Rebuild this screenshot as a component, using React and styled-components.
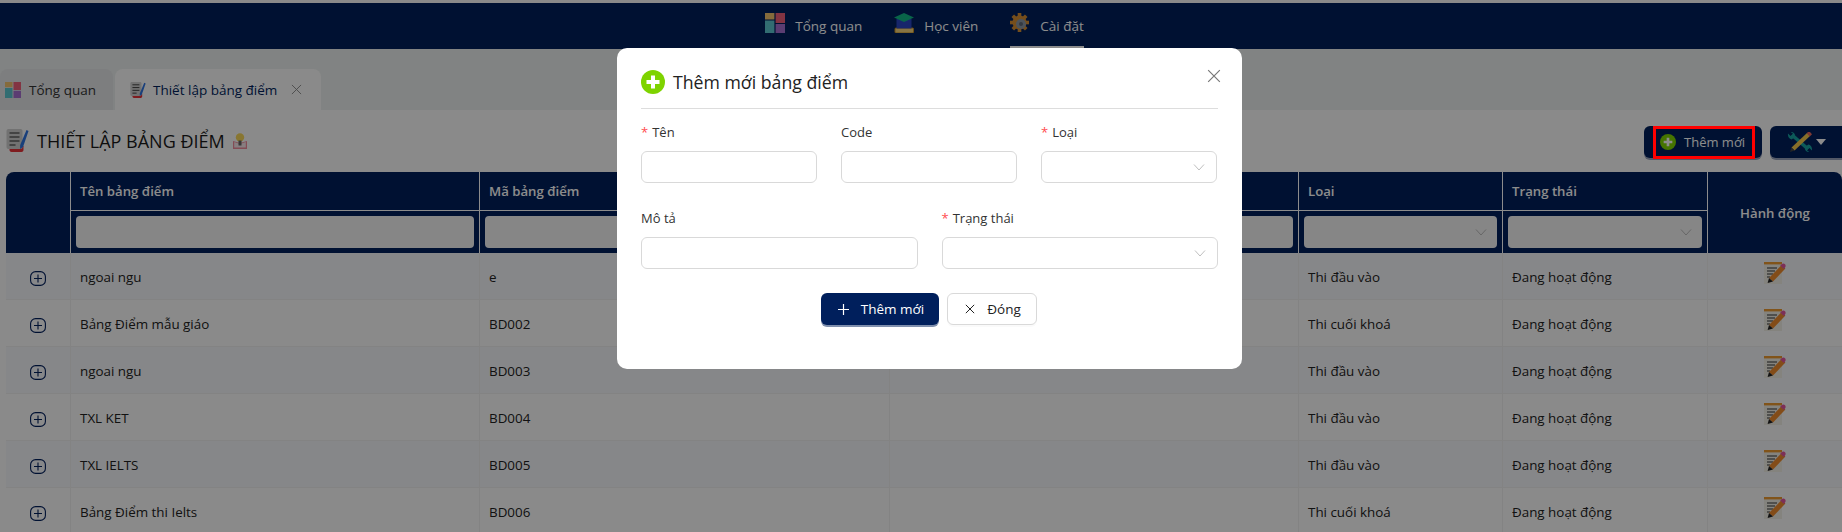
import React from "react";
import styled, { createGlobalStyle } from "styled-components";

const FONT = `"Open Sans", "Noto Sans", "Liberation Sans", sans-serif`;
const NAVY = "#001f5c";

const Global = createGlobalStyle`
  html, body { margin: 0; padding: 0; background: #fff; }
  body { font-family: ${FONT}; font-size: 13px; color: #222; }
  * { box-sizing: border-box; }
`;

const Page = styled.div`
  position: relative;
  width: 1842px;
  height: 532px;
  overflow: hidden;
  padding-top: 3px;
  background: #fcfcfc;
`;
const TopNav = styled.nav`
  height: 46px;
  background: ${NAVY};
  display: flex;
  justify-content: center;
  padding-left: 7px;
  gap: 32px;
`;
const NavItem = styled.div`
  height: 46px;
  display: flex;
  align-items: center;
  gap: 10px;
  padding-bottom: 3px;
  color: #fff;
  font-size: 13.5px;
  border-bottom: 3px solid ${(p) => (p.$active ? "#fff" : "transparent")};
`;
const NavLabel = styled.span`
  padding-top: 6px;
`;
const TabBar = styled.div`
  height: 61px;
  background: #ebefee;
  padding-top: 20px;
  display: flex;
  gap: 2px;
`;
const Tab = styled.div`
  height: 41px;
  display: flex;
  align-items: center;
  gap: ${(p) => (p.$active ? 7 : 8)}px;
  border-radius: 8px 8px 0 0;
  font-size: 13.5px;
  padding: ${(p) => (p.$active ? "0 19px 0 15px" : "0 17px 0 5px")};
  background: ${(p) => (p.$active ? "#fcfcfc" : "#e3e5e8")};
  color: ${(p) => (p.$active ? NAVY : "#333")};
`;
const CloseMark = styled.span`
  display: inline-flex;
  margin-left: 7px;
  color: #888;
`;
const Toolbar = styled.div`
  height: 62px;
  display: flex;
  justify-content: space-between;
  padding: 16px 0 0 6px;
`;
const PageTitle = styled.h1`
  margin: 3px 0 0;
  height: 23px;
  display: flex;
  align-items: center;
  gap: 8px;
  font-size: 18px;
  font-weight: 500;
  color: #1a1a1a;
`;
const Actions = styled.div`
  display: flex;
  gap: 8px;
`;
const DarkButton = styled.div`
  height: 32px;
  display: flex;
  align-items: center;
  border-radius: 6px;
  background: ${NAVY};
  color: #fff;
  font-size: 13px;
  box-shadow: 0 2px 0 rgba(0, 31, 92, 0.4);
`;
const AddButton = styled(DarkButton)`
  width: 118px;
  gap: 8px;
  padding-left: 16px;
`;
const ToolButton = styled(DarkButton)`
  width: 72px;
  gap: 3px;
  padding-left: 17px;
  border-radius: 6px 0 0 6px;
`;
const Caret = styled.span`
  width: 0;
  height: 0;
  border-left: 5px solid transparent;
  border-right: 5px solid transparent;
  border-top: 6px solid #fff;
`;
const TableWrap = styled.div`
  padding-left: 6px;
`;
const Table = styled.table`
  width: 1836px;
  table-layout: fixed;
  border-collapse: separate;
  border-spacing: 0;
`;
const HeadCell = styled.th`
  height: ${(p) => p.$h}px;
  padding: ${(p) => (p.$filter ? "5px" : "0 9px")};
  background: ${NAVY};
  color: #fff;
  font-size: 13.2px;
  font-weight: 600;
  text-align: ${(p) => (p.$center ? "center" : "left")};
  border-left: ${(p) => (p.$first ? "none" : "1px solid #fff")};
  border-bottom: ${(p) => (p.$line ? "1px solid #fff" : "none")};
  border-top-left-radius: ${(p) => (p.$first ? "8px" : "0")};
  border-top-right-radius: ${(p) => (p.$last ? "8px" : "0")};
`;
const FilterBox = styled.div`
  height: 32px;
  border-radius: 4px;
  background: #f5f5f5;
  display: flex;
  align-items: center;
  justify-content: flex-end;
  padding-right: 10px;
  color: #bbb;
`;
const BodyRow = styled.tr`
  background: ${(p) => (p.$odd ? "#fcfcfc" : "#f5f6f9")};
`;
const Cell = styled.td`
  height: 47px;
  padding: 1px 9px 0;
  font-size: 13.4px;
  color: #222;
  border-left: ${(p) => (p.$first ? "none" : "1px solid #eee")};
  border-bottom: 1px solid #eee;
  vertical-align: middle;
`;
const IconCell = styled(Cell)`
  padding: 0;
  text-align: center;
`;
const ExpandSlot = styled.span`
  display: inline-flex;
  padding-top: 8px;
`;
const EditSlot = styled.span`
  display: inline-flex;
  padding-bottom: 6px;
`;
const Overlay = styled.div`
  position: absolute;
  inset: 0;
  background: rgba(0, 0, 0, 0.45);
`;
const Highlight = styled.div`
  position: absolute;
  left: 1653px;
  top: 126px;
  width: 102px;
  height: 33px;
  border: 3px solid #ff0000;
`;
const Modal = styled.div`
  position: absolute;
  left: 617px;
  top: 48px;
  width: 625px;
  height: 321px;
  background: #fff;
  border-radius: 10px;
  padding: 22px 24px 0;
`;
const ModalHead = styled.div`
  height: 39px;
  display: flex;
  align-items: flex-start;
  gap: 8px;
  border-bottom: 1px solid #ddd;
`;
const ModalTitle = styled.div`
  font-size: 17.7px;
  font-weight: 500;
  color: #222;
  line-height: 25px;
`;
const ModalClose = styled.div`
  position: absolute;
  right: 21px;
  top: 21px;
  display: flex;
  color: #777;
`;
const FormRow = styled.div`
  display: grid;
  grid-template-columns: ${(p) => p.$template};
  gap: 24px;
  margin-top: ${(p) => p.$top}px;
`;
const Field = styled.div`
  display: flex;
  flex-direction: column;
`;
const Label = styled.label`
  height: 18px;
  line-height: 16px;
  margin-bottom: 9px;
  font-size: 13px;
  color: #333;
`;
const Star = styled.span`
  color: #ff4d4f;
  margin-right: 4px;
`;
const InputBox = styled.div`
  height: 32px;
  border: 1px solid #d9d9d9;
  border-radius: 6px;
  display: flex;
  align-items: center;
  justify-content: flex-end;
  padding-right: 11px;
  color: #bfbfbf;
`;
const ModalFooter = styled.div`
  display: flex;
  justify-content: center;
  gap: 8px;
  margin-top: 24px;
  padding-right: 1px;
`;
const PrimaryButton = styled.button`
  width: 118px;
  height: 32px;
  border: none;
  border-radius: 6px;
  padding: 0 0 0 2px;
  background: ${NAVY};
  color: #fff;
  font: 500 13.5px ${FONT};
  display: flex;
  align-items: center;
  justify-content: center;
  gap: 12px;
  box-shadow: 0 2px 0 rgba(0, 31, 92, 0.5);
`;
const GhostButton = styled.button`
  width: 90px;
  height: 32px;
  border: 1px solid #d9d9d9;
  border-radius: 6px;
  padding: 0 0 0 2px;
  background: #fff;
  color: #222;
  font: 400 13.5px ${FONT};
  display: flex;
  align-items: center;
  justify-content: center;
  gap: 12px;
  box-shadow: 0 2px 0 rgba(0, 0, 0, 0.02);
`;

const Chevron = () => (
  <svg width="12" height="12" viewBox="0 0 12 12" fill="none" stroke="currentColor" strokeWidth="1">
    <path d="M1 3.5 6 9l5-5.5" />
  </svg>
);
const Cross = ({ s = 12, w = 1 }) => (
  <svg width={s} height={s} viewBox="0 0 12 12" fill="none" stroke="currentColor" strokeWidth={w}>
    <path d="M1 1l10 10M11 1 1 11" />
  </svg>
);
const Plus = () => (
  <svg width="11" height="11" viewBox="0 0 11 11" fill="none" stroke="currentColor" strokeWidth="1.2">
    <path d="M5.5 0v11M0 5.5h11" />
  </svg>
);
const TilesIcon = ({ s = 20 }) => (
  <svg width={s} height={s} viewBox="0 0 20 20">
    <rect x="0" y="0" width="9.4" height="6.5" fill="#f2c46d" />
    <rect x="0" y="7.5" width="9.4" height="12.5" fill="#5cc6d0" />
    <rect x="10.6" y="0" width="9.4" height="10" fill="#ee5f78" />
    <rect x="10.6" y="11" width="9.4" height="9" fill="#a66fd0" />
  </svg>
);
const CapIcon = () => (
  <svg width="20" height="20" viewBox="0 0 20 20">
    <rect x="1" y="15" width="18.5" height="5" rx="1" fill="#f6d47a" stroke="#c98f1f" strokeWidth="1" />
    <rect x="2.5" y="6" width="15" height="9.5" fill="#2a46c4" />
    <path d="M10 0 20 4.5 10 9 0 4.5z" fill="#12b886" />
  </svg>
);
const GearIcon = () => (
  <svg width="20" height="20" viewBox="0 0 20 20">
    <g fill="#d58f33" transform="translate(9.5 9.5)">
      {[0, 45, 90, 135, 180, 225, 270, 315].map((a) => (
        <rect key={a} x="-1.8" y="-9.5" width="3.6" height="4" transform={`rotate(${a})`} />
      ))}
      <circle r="7" />
    </g>
    <circle cx="11" cy="11" r="5" fill="#8d99a6" />
    <circle cx="11" cy="11" r="2" fill="#5d6a78" />
  </svg>
);
const NotebookIcon = ({ s = 16 }) => (
  <svg width={s} height={s} viewBox="0 0 22 23">
    <path d="M3 17h14v4c0 1-1 2-2 2H5c-1 0-2-1-2-2z" fill="#e8343a" />
    <rect x="0" y="0" width="16" height="20" rx="2" fill="#cfcfcf" />
    <path d="M3 4h10M3 8h10M3 12h10M3 16h6" stroke="#2a2a2a" strokeWidth="1.2" />
    <path d="M20 1 22 2 16.5 18l-3 2 .2-4z" fill="#2f74e0" />
  </svg>
);
const BulbBookIcon = () => (
  <svg width="14" height="16" viewBox="0 0 14 16">
    <path d="M0 8 7 10 14 8v8H0z" fill="#ee8b9b" />
    <path d="M1.2 9 7 11l5.8-2v5.5H1.2z" fill="#f6e6ea" />
    <circle cx="7" cy="4.4" r="4.2" fill="#f8d75a" />
    <rect x="5.5" y="7.5" width="3" height="5" fill="#666" />
  </svg>
);
const ToolsIcon = () => (
  <svg width="26" height="20" viewBox="0 0 26 20" fill="none">
    <path d="M5 3 21 17" stroke="#17a2a2" strokeWidth="3.6" />
    <path d="M1 1.6 3.6 4 6 1.8 3.8 0C6.4-.4 8.6 2 8 5L4.6 7.4C2 7 .6 4 1 1.6z" fill="#17a2a2" />
    <path d="M25 18.4 22.4 16 20 18.2l2.2 1.8c-2.6.4-4.8-2-4.2-5l3.4-2.4c2.6.4 4 3.4 3.6 5.8z" fill="#17a2a2" />
    <path d="M21.5 2.5 6 17" stroke="#f5c84c" strokeWidth="4.4" />
    <path d="M21.2 2.8 23.5.6" stroke="#e8675b" strokeWidth="4.4" />
    <path d="M7.6 18.6 4.4 15.4 3 20z" fill="#444" />
  </svg>
);
const EditIcon = () => (
  <svg width="22" height="22" viewBox="0 0 22 22">
    <rect x="0" y="0" width="18" height="22" fill="#f0eee6" />
    <rect x="0" y="0" width="18" height="2.4" fill="#eb9a30" />
    <path d="M3 6h10M3 9h8M3 12h6M3 15h3" stroke="#333" strokeWidth="1.2" />
    <path d="M17.6 3 21.4 6.6 9 19.4 5 16z" fill="#ef8b2c" />
    <path d="M17.4 2.6c1-1.2 2.6-1.4 3.6-.4s.8 2.6-.2 3.6l-1 1.2-3.6-3.4z" fill="#e2569e" />
    <path d="M5 16 9 19.4 3.6 21z" fill="#222" />
  </svg>
);
const GreenPlus = ({ s }) => (
  <svg width={s} height={s} viewBox="0 0 24 24">
    <circle cx="12" cy="12" r="12" fill="#7ed300" />
    <path d="M12 5.5v13M5.5 12h13" stroke="#fff" strokeWidth="4" />
  </svg>
);
const ExpandIcon = () => (
  <svg width="16" height="15" viewBox="0 0 16 15" fill="none" stroke={NAVY} strokeWidth="1.1">
    <rect x="0.6" y="0.6" width="14.8" height="13.8" rx="5" />
    <path d="M4 7.5h8M8 3.5v8" />
  </svg>
);

const columns = [64, 409, 410, 409, 204, 205, 135];
const rows = [
  ["ngoai ngu", "e", "Thi đầu vào"],
  ["Bảng Điểm mẫu giáo", "BD002", "Thi cuối khoá"],
  ["ngoai ngu", "BD003", "Thi đầu vào"],
  ["TXL KET", "BD004", "Thi đầu vào"],
  ["TXL IELTS", "BD005", "Thi đầu vào"],
  ["Bảng Điểm thi Ielts", "BD006", "Thi cuối khoá"],
];

function RequiredLabel({ required, children }) {
  return (
    <Label>
      {required && <Star>*</Star>}
      {children}
    </Label>
  );
}

export default function App() {
  return (
    <Page>
      <Global />
      <TopNav>
        <NavItem><TilesIcon /><NavLabel>Tổng quan</NavLabel></NavItem>
        <NavItem><CapIcon /><NavLabel>Học viên</NavLabel></NavItem>
        <NavItem $active><GearIcon /><NavLabel>Cài đặt</NavLabel></NavItem>
      </TopNav>
      <TabBar>
        <Tab><TilesIcon s={16} />Tổng quan</Tab>
        <Tab $active>
          <NotebookIcon />
          Thiết lập bảng điểm
          <CloseMark><Cross s={11} /></CloseMark>
        </Tab>
      </TabBar>
      <Toolbar>
        <PageTitle>
          <NotebookIcon s={23} />
          THIẾT LẬP BẢNG ĐIỂM
          <BulbBookIcon />
        </PageTitle>
        <Actions>
          <AddButton><GreenPlus s={16} />Thêm mới</AddButton>
          <ToolButton><ToolsIcon /><Caret /></ToolButton>
        </Actions>
      </Toolbar>
      <TableWrap>
        <Table>
          <colgroup>
            {columns.map((w, i) => <col key={i} style={{ width: w }} />)}
          </colgroup>
          <thead>
            <tr>
              <HeadCell $h={39} $first rowSpan={2} />
              <HeadCell $h={39} $line>Tên bảng điểm</HeadCell>
              <HeadCell $h={39} $line>Mã bảng điểm</HeadCell>
              <HeadCell $h={39} $line>Mô tả</HeadCell>
              <HeadCell $h={39} $line>Loại</HeadCell>
              <HeadCell $h={39} $line>Trạng thái</HeadCell>
              <HeadCell $h={39} $last $center rowSpan={2}>Hành động</HeadCell>
            </tr>
            <tr>
              <HeadCell $h={42} $filter><FilterBox /></HeadCell>
              <HeadCell $h={42} $filter><FilterBox /></HeadCell>
              <HeadCell $h={42} $filter><FilterBox /></HeadCell>
              <HeadCell $h={42} $filter><FilterBox><Chevron /></FilterBox></HeadCell>
              <HeadCell $h={42} $filter><FilterBox><Chevron /></FilterBox></HeadCell>
            </tr>
          </thead>
          <tbody>
            {rows.map((r, i) => (
              <BodyRow key={i} $odd={i % 2 === 1}>
                <IconCell $first><ExpandSlot><ExpandIcon /></ExpandSlot></IconCell>
                <Cell>{r[0]}</Cell>
                <Cell>{r[1]}</Cell>
                <Cell />
                <Cell>{r[2]}</Cell>
                <Cell>Đang hoạt động</Cell>
                <IconCell><EditSlot><EditIcon /></EditSlot></IconCell>
              </BodyRow>
            ))}
          </tbody>
        </Table>
      </TableWrap>
      <Overlay />
      <Highlight />
      <Modal>
        <ModalHead>
          <GreenPlus s={24} />
          <ModalTitle>Thêm mới bảng điểm</ModalTitle>
        </ModalHead>
        <ModalClose><Cross s={14} /></ModalClose>
        <FormRow $template="repeat(3, 176px)" $top={15}>
          <Field>
            <RequiredLabel required>Tên</RequiredLabel>
            <InputBox />
          </Field>
          <Field>
            <RequiredLabel>Code</RequiredLabel>
            <InputBox />
          </Field>
          <Field>
            <RequiredLabel required>Loại</RequiredLabel>
            <InputBox><Chevron /></InputBox>
          </Field>
        </FormRow>
        <FormRow $template="1fr 1fr" $top={27}>
          <Field>
            <RequiredLabel>Mô tả</RequiredLabel>
            <InputBox />
          </Field>
          <Field>
            <RequiredLabel required>Trạng thái</RequiredLabel>
            <InputBox><Chevron /></InputBox>
          </Field>
        </FormRow>
        <ModalFooter>
          <PrimaryButton><Plus />Thêm mới</PrimaryButton>
          <GhostButton><Cross s={10} w={1.2} />Đóng</GhostButton>
        </ModalFooter>
      </Modal>
    </Page>
  );
}
